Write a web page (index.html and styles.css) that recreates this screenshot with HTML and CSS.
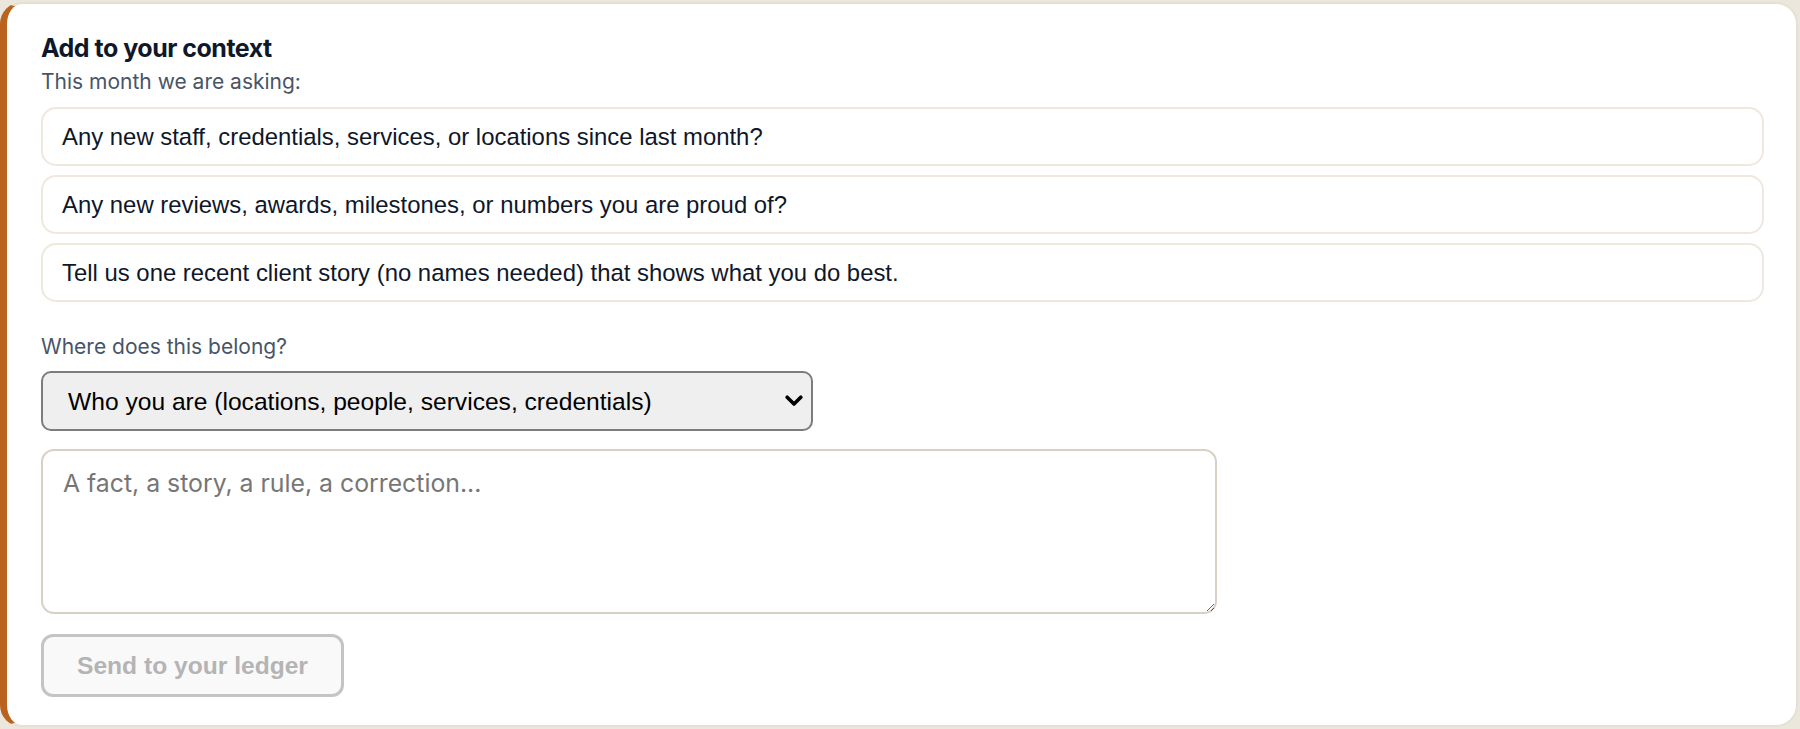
FILE: index.html
```html
<!DOCTYPE html>
<html lang="en">
<head>
<meta charset="utf-8">
<title>Add to your context</title>
<link rel="stylesheet" href="styles.css">
</head>
<body>
<section class="card">
  <h2 class="title">Add to your context</h2>
  <p class="subtitle">This month we are asking:</p>
  <div class="prompts">
    <button class="prompt" type="button">Any new staff, credentials, services, or locations since last month?</button>
    <button class="prompt" type="button">Any new reviews, awards, milestones, or numbers you are proud of?</button>
    <button class="prompt" type="button">Tell us one recent client story (no names needed) that shows what you do best.</button>
  </div>
  <label class="field-label" for="section">Where does this belong?</label>
  <select class="section-select" id="section">
    <option>Who you are (locations, people, services, credentials)</option>
  </select>
  <textarea class="note" placeholder="A fact, a story, a rule, a correction..."></textarea>
  <button class="send" type="button" disabled>Send to your ledger</button>
</section>
</body>
</html>
```
FILE: styles.css
```css
html, body {
  margin: 0;
  padding: 0;
}

body {
  background: #ece7dd;
  padding: 2px 2px 0 0;
  font-family: Inter, "Noto Sans", sans-serif;
}

.card {
  display: flex;
  flex-direction: column;
  align-items: flex-start;
  background: #ffffff;
  border: 2px solid #e6e0d3;
  border-left: 7px solid #b9631f;
  border-radius: 22px;
  padding: 29px 32px 28px 34px;
}

.title {
  margin: 0 0 4px;
  font-family: Inter, sans-serif;
  font-weight: 700;
  font-size: 25px;
  line-height: 30px;
  letter-spacing: -0.5px;
  color: #0f172a;
}

.subtitle {
  margin: 0 0 10px;
  font-size: 21px;
  line-height: 30px;
  color: #475569;
}

.prompts {
  align-self: stretch;
  display: flex;
  flex-direction: column;
  gap: 9px;
}

.prompt {
  display: block;
  text-align: left;
  background: #ffffff;
  border: 2px solid #eee8dd;
  border-radius: 15px;
  padding: 14px 19px 13px;
  font-family: "Liberation Sans", Arial, sans-serif;
  font-size: 23.9px;
  line-height: 28px;
  color: #0f172a;
  cursor: pointer;
}

.field-label {
  margin-top: 30px;
  font-size: 21px;
  line-height: 30px;
  color: #475569;
}

.section-select {
  margin-top: 9px;
  width: 772px;
  height: 60px;
  padding: 0 40px 0 25px;
  -webkit-appearance: none;
  appearance: none;
  background-color: #efefef;
  background-image: url("data:image/svg+xml;utf8,<svg xmlns='http://www.w3.org/2000/svg' width='18' height='12' viewBox='0 0 18 12'><path d='M2.2 2.2 L9 9 L15.8 2.2' fill='none' stroke='black' stroke-width='3.6' stroke-linecap='round' stroke-linejoin='round'/></svg>");
  background-repeat: no-repeat;
  background-position: right 8px center;
  background-size: 18px 12px;
  border: 2px solid #7c7c7c;
  border-radius: 10px;
  font-family: "Liberation Sans", Arial, sans-serif;
  font-size: 24.6px;
  color: #000000;
}

.note {
  margin-top: 18px;
  width: 1176px;
  height: 165px;
  box-sizing: border-box;
  padding: 14px 20px;
  border: 2px solid #d8d0c3;
  border-radius: 13px;
  font-family: Inter, sans-serif;
  font-size: 24.8px;
  line-height: 36px;
  color: #0f172a;
  background: #ffffff;
}

.note::placeholder {
  color: #767676;
}

.send {
  margin-top: 20px;
  height: 63px;
  padding: 0 33px;
  background: #f9f9f9;
  border: 3px solid #c4c4c4;
  border-radius: 12px;
  font-family: "Liberation Sans", Arial, sans-serif;
  font-weight: 700;
  font-size: 24.6px;
  color: #b4b4b4;
}
```
